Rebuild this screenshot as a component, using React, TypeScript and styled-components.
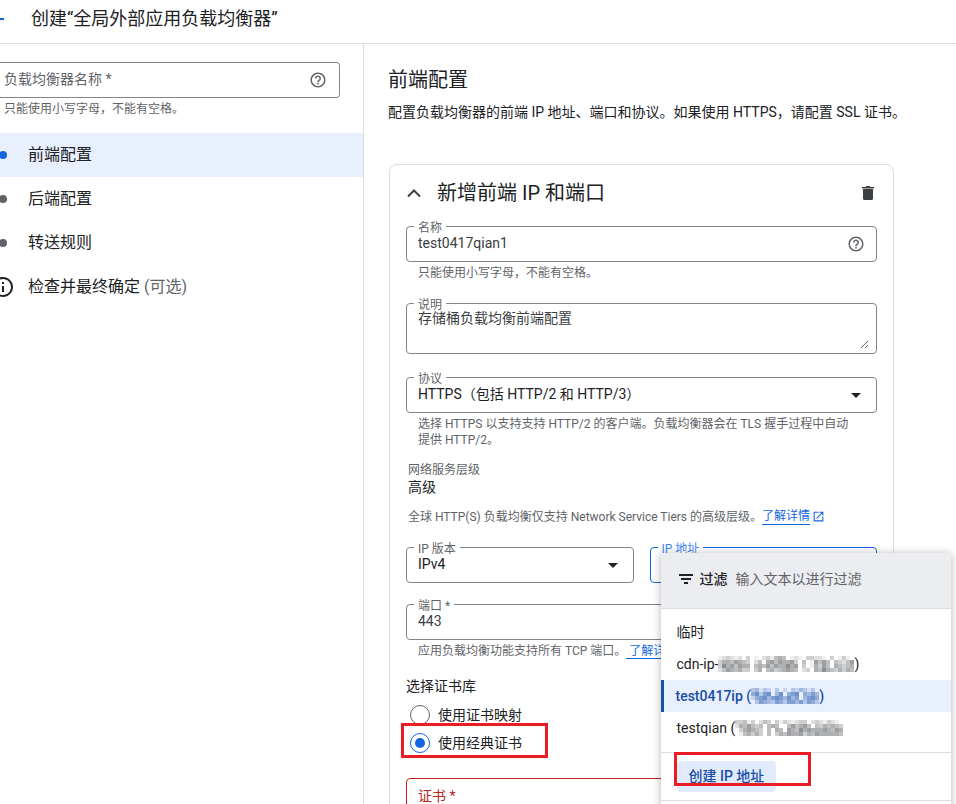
import React from 'react';
import styled, { createGlobalStyle, css } from 'styled-components';

const color = {
  text: '#202124',
  value: '#3c4043',
  muted: '#5f6368',
  outline: '#80868b',
  line: '#dadce0',
  blue: '#1166df',
  deepBlue: '#174ea6',
  tint: '#e8effd',
  error: '#b3261e',
  mark: '#ec1c24',
};

const GlobalStyle = createGlobalStyle`
  *, *::before, *::after { box-sizing: border-box; }
  body { margin: 0; background: #fff; }
  body, button, input, select, textarea {
    font-family: Roboto, "Noto Sans CJK SC", sans-serif;
    font-size: 14px;
    line-height: 20px;
    color: ${color.text};
  }
  svg { display: block; flex: none; }
`;

const Page = styled.div`
  height: 100vh;
  display: flex;
  flex-direction: column;
  overflow: hidden;
`;

const TopBar = styled.header`
  flex: none;
  display: flex;
  align-items: center;
  gap: 23px;
  height: 44px;
  padding-bottom: 6px;
  border-bottom: 1px solid ${color.line};
`;

const BackButton = styled.button`
  display: flex;
  margin-left: -16px;
  padding: 0;
  border: 0;
  background: none;
  color: ${color.blue};
  cursor: pointer;
`;

const PageTitle = styled.h1`
  margin: 0;
  font-size: 18px;
  line-height: 24px;
  font-weight: 400;
`;

const Body = styled.div`
  flex: 1;
  min-height: 0;
  display: grid;
  grid-template-columns: 364px minmax(0, 1fr);
`;

const Sidebar = styled.aside`
  padding-top: 18px;
  border-right: 1px solid ${color.line};
`;

const BalancerName = styled.div`
  margin-right: 23px;
`;

const BalancerBox = styled.div`
  display: flex;
  align-items: center;
  height: 36px;
  padding: 0 12px 0 4px;
  border: 1px solid ${color.outline};
  border-left: 0;
  border-radius: 0 4px 4px 0;
  color: ${color.muted};
`;

const TextInput = styled.input`
  flex: 1;
  min-width: 0;
  padding: 0 0 2px;
  border: 0;
  outline: 0;
  background: none;
  color: ${color.value};
  &::placeholder { color: ${color.muted}; opacity: 1; }
`;

const FilterInput = styled(TextInput)`
  padding: 0;
`;

const Hint = styled.p<{ $inset?: number }>`
  margin: 0;
  padding: 3px 20px 0 ${(p) => p.$inset ?? 12}px;
  font-size: 12px;
  line-height: 16px;
  color: ${color.muted};
`;

const StepList = styled.nav`
  display: flex;
  flex-direction: column;
  margin-top: 16px;
`;

const Step = styled.a<{ $active?: boolean }>`
  display: flex;
  align-items: center;
  height: 44px;
  font-size: 16px;
  line-height: 24px;
  text-decoration: none;
  color: ${color.text};
  background: ${(p) => (p.$active ? color.tint : 'transparent')};
`;

const StepMark = styled.span<{ $active?: boolean }>`
  display: flex;
  justify-content: center;
  width: 24px;
  margin-left: -9px;
  margin-right: 13px;
  color: ${(p) => (p.$active ? color.blue : color.muted)};
`;

const Dot = styled.span`
  width: 8px;
  height: 8px;
  border-radius: 50%;
  background: currentColor;
`;

const Optional = styled.span`
  margin-left: 4px;
  color: ${color.muted};
`;

const Main = styled.main`
  padding: 23px 24px;
  overflow: auto;
  scrollbar-width: none;
`;

const SectionTitle = styled.h2`
  margin: 0;
  font-size: 20px;
  line-height: 26px;
  font-weight: 400;
`;

const Lead = styled.p`
  margin: 9px 0 0;
`;

const Card = styled.section`
  max-width: 505px;
  margin-top: 42px;
  margin-left: 1px;
  padding: 12px 16px 24px;
  border: 1px solid ${color.line};
  border-radius: 8px;
`;

const CardHeader = styled.div`
  display: flex;
  align-items: center;
  height: 31px;
`;

const IconButton = styled.button`
  display: flex;
  padding: 0;
  border: 0;
  background: none;
  color: ${color.value};
  cursor: pointer;
`;

const CardTitle = styled.h3`
  flex: 1;
  margin: 0 0 0 15px;
  font-size: 20px;
  line-height: 28px;
  font-weight: 400;
`;

const Field = styled.div<{ $gap: number }>`
  margin-top: ${(p) => p.$gap}px;
`;

type Tone = 'normal' | 'focus' | 'error';
const toneColor = { normal: color.outline, focus: color.blue, error: '#c5221f' };

const Outline = styled.div<{ $tone?: Tone; $tall?: boolean }>`
  position: relative;
  display: flex;
  align-items: center;
  height: ${(p) => (p.$tall ? 51 : 36)}px;
  padding: ${(p) => (p.$tall ? '4px 7px 4px 11px' : '0 11px')};
  border: 1px solid ${(p) => toneColor[p.$tone ?? 'normal']};
  border-radius: 4px;
  color: ${color.muted};
`;

const FloatLabel = styled.label<{ $focus?: boolean }>`
  position: absolute;
  top: -8px;
  left: 7px;
  padding: 1px 4px 0;
  background: #fff;
  font-size: 12px;
  line-height: 16px;
  color: ${(p) => (p.$focus ? '#4285f4' : color.muted)};
`;

const TextArea = styled.textarea`
  position: relative;
  flex: 1;
  height: 100%;
  padding: 0;
  border: 0;
  outline: 0;
  background: none;
  color: ${color.value};
  resize: vertical;
  scrollbar-width: none;
`;

const Select = styled.select`
  flex: 1;
  min-width: 0;
  padding: 0 0 2px;
  border: 0;
  outline: 0;
  appearance: none;
  background: none;
`;

const Arrow = styled.svg`
  margin-right: 4px;
  pointer-events: none;
`;

const Fact = styled.dl`
  margin: 14px 0 0 2px;
  dt { font-size: 12px; line-height: 16px; color: ${color.muted}; }
  dd { margin: 0; line-height: 18px; }
`;

const Note = styled.p`
  display: flex;
  align-items: center;
  margin: 12px 0 0 2px;
  font-size: 12px;
  line-height: 16px;
  color: ${color.muted};
`;

const Link = styled.a`
  color: ${color.blue};
  text-decoration: none;
  border-bottom: 1px solid currentColor;
  white-space: pre;
`;

const ExternalMark = styled.span`
  margin-left: 2px;
  color: ${color.blue};
`;

const Pair = styled.div`
  display: grid;
  grid-template-columns: 1fr 1fr;
  gap: 16px;
  margin-top: 22px;
`;

const RadioGroup = styled.fieldset`
  margin: 17px 0 0;
  padding: 0;
  border: 0;
`;

const GroupTitle = styled.legend`
  padding: 0;
  margin-bottom: 5px;
`;

const RadioRow = styled.label`
  position: relative;
  display: flex;
  align-items: center;
  width: fit-content;
  height: 28px;
  padding-left: 4px;
  gap: 8px;
`;

const Radio = styled.input`
  appearance: none;
  display: grid;
  place-content: center;
  width: 20px;
  height: 20px;
  margin: 0;
  border: 1px solid ${color.muted};
  border-radius: 50%;
  background: #fff;
  &:checked { border-color: ${color.blue}; }
  &:checked::before {
    content: "";
    width: 10px;
    height: 10px;
    border-radius: 50%;
    background: ${color.blue};
  }
`;

const Marker = styled.span<{ $area: 'radio' | 'action' }>`
  position: absolute;
  border: 3px solid ${color.mark};
  pointer-events: none;
  ${(p) =>
    p.$area === 'radio'
      ? css`top: -6px; left: -5px; width: 147px; height: 35px;`
      : css`top: -9px; left: -3px; width: 137px; height: 34px;`}
`;

const ErrorInput = styled(TextInput)`
  padding: 0;
  &::placeholder { color: ${color.error}; }
`;

const Menu = styled.div`
  position: absolute;
  z-index: 2;
  top: 5px;
  left: 10px;
  width: 290px;
  height: 300px;
  background: #fff;
  border-radius: 2px;
  box-shadow: 0 1px 8px rgba(32, 33, 36, 0.34);
`;

const FilterBar = styled.div`
  display: flex;
  align-items: center;
  height: 56px;
  padding: 0 16px 3px;
  border-bottom: 1px solid ${color.line};
  background: #ecedf1;
`;

const FilterLabel = styled.label`
  margin: 0 8px 0 5px;
  font-weight: 500;
  color: ${color.text};
`;

const Options = styled.div`
  padding: 7px 0 8px;
  border-bottom: 1px solid ${color.line};
`;

const Option = styled.button<{ $selected?: boolean }>`
  display: flex;
  align-items: center;
  width: 100%;
  height: 32px;
  padding: 0 16px;
  border: 0;
  background: none;
  text-align: left;
  ${(p) =>
    p.$selected &&
    css`
      padding-left: 12px;
      border-left: 3px solid ${color.deepBlue};
      background: ${color.tint};
      color: ${color.deepBlue};
      font-weight: 500;
    `}
`;

const MenuFooter = styled.div`
  display: flex;
  height: 48px;
  padding: 8px 16px;
  border-bottom: 1px solid ${color.line};
`;

const ActionWrap = styled.div`
  position: relative;
  height: 31px;
`;

const ActionButton = styled.button`
  height: 100%;
  padding: 0 12px 2px;
  border: 0;
  border-radius: 4px;
  background: #e1ebfb;
  color: ${color.deepBlue};
  font-weight: 500;
`;

const HelpIcon = () => (
  <svg width="18" height="18" viewBox="0 0 24 24" fill={color.muted} aria-hidden="true">
    <path d="M11 18h2v-2h-2v2zm1-16C6.48 2 2 6.48 2 12s4.48 10 10 10 10-4.48 10-10S17.52 2 12 2zm0 18c-4.41 0-8-3.59-8-8s3.59-8 8-8 8 3.59 8 8-3.59 8-8 8zm0-14c-2.21 0-4 1.79-4 4h2c0-1.1.9-2 2-2s2 .9 2 2c0 2-3 1.75-3 5h2c0-2.25 3-2.5 3-5 0-2.21-1.79-4-4-4z" />
  </svg>
);

const DropArrow = () => (
  <Arrow width="10" height="5" viewBox="0 0 10 5" aria-hidden="true">
    <path d="M0 0h10L5 5z" fill={color.text} />
  </Arrow>
);

const LaunchIcon = () => (
  <svg width="13" height="13" viewBox="0 0 24 24" fill="currentColor" aria-hidden="true">
    <path d="M19 19H5V5h7V3H3v18h18v-9h-2v7zM14 3v2h3.59l-9.83 9.83 1.41 1.41L19 6.41V10h2V3h-7z" />
  </svg>
);

/* Each digit is the darkness of one 4px cell, from 0 (clear) to 9. */
const masks = {
  cdn: ['1232120301023145401210332210301310', '3554654302405646556304016464043246', '3756465504546465575603015364054345', '2465453303504534565402305475435354'],
  test: ['34132030203243130', '57367047056705464', '25674676474604675', '03654365366463653'],
  qian: ['334130243031321233023213210', '254643404540046456404354543', '035654304054065475655565465', '014535304035465563546555554'],
};

const Mosaic = ({ rows, fill }: { rows: string[]; fill: string }) => (
  <svg width={rows[0].length * 4} height="16" viewBox={`0 0 ${rows[0].length * 4} 16`} shapeRendering="crispEdges" aria-hidden="true">
    {rows.flatMap((row, y) =>
      [...row].map((cell, x) => (
        <rect key={`${x}-${y}`} x={x * 4} y={y * 4} width="4" height="4" fill={fill} opacity={Number(cell) / 12} />
      )),
    )}
  </svg>
);

export default function App() {
  return (
    <>
      <GlobalStyle />
      <Page>
        <TopBar>
          <BackButton aria-label="返回">
            <svg width="24" height="24" viewBox="0 0 24 24" fill="currentColor">
              <path d="M20 11H7.83l5.59-5.59L12 4l-8 8 8 8 1.41-1.41L7.83 13H20z" />
            </svg>
          </BackButton>
          <PageTitle>创建“全局外部应用负载均衡器”</PageTitle>
        </TopBar>
        <Body>
          <Sidebar>
            <BalancerName>
              <BalancerBox>
                <TextInput aria-label="负载均衡器名称" placeholder="负载均衡器名称 *" />
                <HelpIcon />
              </BalancerBox>
              <Hint $inset={4}>只能使用小写字母，不能有空格。</Hint>
            </BalancerName>
            <StepList>
              <Step href="#frontend" $active>
                <StepMark $active><Dot /></StepMark>前端配置
              </Step>
              <Step href="#backend">
                <StepMark><Dot /></StepMark>后端配置
              </Step>
              <Step href="#routing">
                <StepMark><Dot /></StepMark>转送规则
              </Step>
              <Step href="#review">
                <StepMark>
                  <svg width="24" height="24" viewBox="0 0 24 24" fill={color.text} aria-hidden="true">
                    <path d="M11 7h2v2h-2zm0 4h2v6h-2zm1-9C6.48 2 2 6.48 2 12s4.48 10 10 10 10-4.48 10-10S17.52 2 12 2zm0 18c-4.41 0-8-3.59-8-8s3.59-8 8-8 8 3.59 8 8-3.59 8-8 8z" />
                  </svg>
                </StepMark>
                检查并最终确定<Optional>(可选)</Optional>
              </Step>
            </StepList>
          </Sidebar>
          <Main>
            <SectionTitle>前端配置</SectionTitle>
            <Lead>配置负载均衡器的前端 IP 地址、端口和协议。如果使用 HTTPS，请配置 SSL 证书。</Lead>
            <Card>
              <CardHeader>
                <IconButton aria-label="收起">
                  <svg width="16" height="16" viewBox="0 0 16 16" fill="none" stroke="currentColor" strokeWidth="2">
                    <path d="M2 11.5l6-6 6 6" />
                  </svg>
                </IconButton>
                <CardTitle>新增前端 IP 和端口</CardTitle>
                <IconButton aria-label="删除">
                  <svg width="18" height="18" viewBox="0 0 18 18" fill="currentColor">
                    <path d="M4 5h10v9.500a1.500 1.500 0 0 1-1.500 1.500h-7A1.500 1.500 0 0 1 4 14.500zM3 3h3.500l.8-1h3.400l.8 1H15v1.500H3z" />
                  </svg>
                </IconButton>
              </CardHeader>
              <Field $gap={18}>
                <Outline>
                  <FloatLabel htmlFor="name">名称</FloatLabel>
                  <TextInput id="name" defaultValue="test0417qian1" />
                  <HelpIcon />
                </Outline>
                <Hint>只能使用小写字母，不能有空格。</Hint>
              </Field>
              <Field $gap={22}>
                <Outline $tall>
                  <FloatLabel htmlFor="description">说明</FloatLabel>
                  <TextArea id="description" defaultValue="存储桶负载均衡前端配置" />
                </Outline>
              </Field>
              <Field $gap={23}>
                <Outline>
                  <FloatLabel htmlFor="protocol">协议</FloatLabel>
                  <Select id="protocol">
                    <option>HTTPS（包括 HTTP/2 和 HTTP/3）</option>
                  </Select>
                  <DropArrow />
                </Outline>
                <Hint>选择 HTTPS 以支持支持 HTTP/2 的客户端。负载均衡器会在 TLS 握手过程中自动提供 HTTP/2。</Hint>
              </Field>
              <Fact>
                <dt>网络服务层级</dt>
                <dd>高级</dd>
              </Fact>
              <Note>
                全球 HTTP(S) 负载均衡仅支持 Network Service Tiers 的高级层级。
                <Link href="#tiers">了解详情</Link>
                <ExternalMark><LaunchIcon /></ExternalMark>
              </Note>
              <Pair>
                <Outline>
                  <FloatLabel htmlFor="ip-version">IP 版本</FloatLabel>
                  <Select id="ip-version">
                    <option>IPv4</option>
                  </Select>
                  <DropArrow />
                </Outline>
                <Outline $tone="focus">
                  <FloatLabel htmlFor="ip-address" $focus>IP 地址</FloatLabel>
                  <Select id="ip-address" />
                  <Menu>
                    <FilterBar>
                      <svg width="18" height="18" viewBox="0 0 18 18" fill={color.text} aria-hidden="true">
                        <path d="M2 4h14v2H2zM4 8h10v2H4zM7 12h4v2H7z" />
                      </svg>
                      <FilterLabel htmlFor="filter">过滤</FilterLabel>
                      <FilterInput id="filter" placeholder="输入文本以进行过滤" />
                    </FilterBar>
                    <Options role="listbox" aria-label="IP 地址">
                      <Option role="option">临时</Option>
                      <Option role="option">cdn-ip-<Mosaic rows={masks.cdn} fill="#3c4043" />)</Option>
                      <Option role="option" aria-selected $selected>test0417ip (<Mosaic rows={masks.test} fill={color.deepBlue} />)</Option>
                      <Option role="option">testqian (<Mosaic rows={masks.qian} fill="#3c4043" /></Option>
                    </Options>
                    <MenuFooter>
                      <ActionWrap>
                        <ActionButton>创建 IP 地址</ActionButton>
                        <Marker $area="action" />
                      </ActionWrap>
                    </MenuFooter>
                  </Menu>
                </Outline>
              </Pair>
              <Field $gap={21}>
                <Outline>
                  <FloatLabel htmlFor="port">端口 *</FloatLabel>
                  <TextInput id="port" defaultValue="443" />
                </Outline>
                <Hint>应用负载均衡功能支持所有 TCP 端口。<Link href="#ports">{' 了解详情'}</Link></Hint>
              </Field>
              <RadioGroup>
                <GroupTitle>选择证书库</GroupTitle>
                <RadioRow>
                  <Radio type="radio" name="store" />使用证书映射
                </RadioRow>
                <RadioRow>
                  <Radio type="radio" name="store" defaultChecked />使用经典证书
                  <Marker $area="radio" />
                </RadioRow>
              </RadioGroup>
              <Field $gap={21}>
                <Outline $tone="error">
                  <ErrorInput aria-label="证书" placeholder="证书 *" />
                </Outline>
              </Field>
            </Card>
          </Main>
        </Body>
      </Page>
    </>
  );
}
